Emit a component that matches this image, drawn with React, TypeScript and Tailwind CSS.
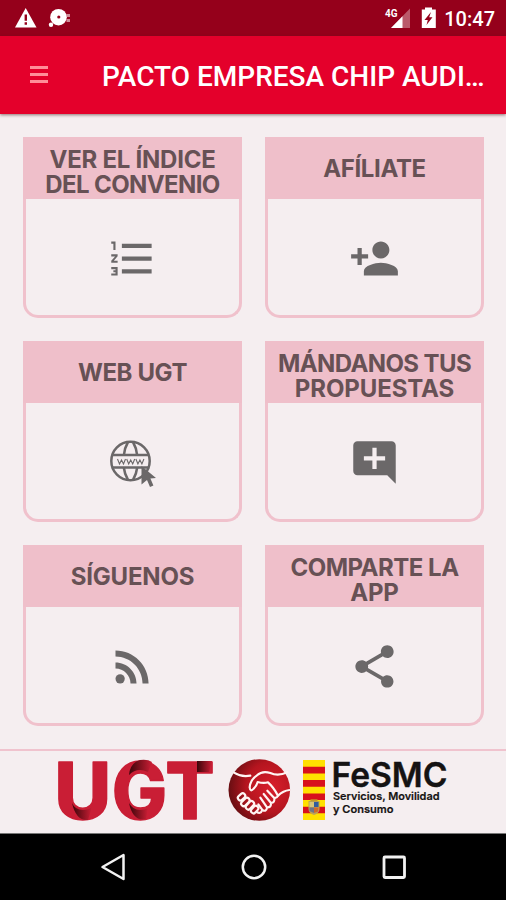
import type { ReactNode } from "react";
import { MdAddComment, MdFormatListNumbered, MdPersonAdd, MdRssFeed, MdShare } from "react-icons/md";

type CardProps = {
  lines: { text: string; spacing: string }[]
  children: ReactNode
}

function StatusBar() {
  return (
    <div className="h-9 bg-[#95001b] flex items-center justify-between pl-[14px] pr-[11px]">
      <svg width="58" height="36" viewBox="14 0 58 36" fill="#fff">
        <path d="M25.700 8 36.500 27.500H15Z" />
        <path d="M24.600 14.500h2.400v6.200h-2.400zM24.600 22.300h2.400v2.500h-2.400z" fill="#95001b" />
        <circle cx="58.500" cy="17.200" r="8.300" />
        <circle cx="51" cy="24.700" r="2.200" />
        <circle cx="58.800" cy="17" r="1.600" fill="#95001b" />
        <path d="M66.500 14h3.500v3h-3.500zM66.500 19h3.500v3h-3.500z" opacity=".55" />
      </svg>
      <div className="flex items-center">
        <svg width="56" height="36" viewBox="384 0 56 36" fill="#fff">
          <path d="M410 8.500V28H391Z" opacity=".35" />
          <path d="M402.500 16.200V28H391Z" />
          <text x="385" y="17" fontSize="11.500" fontWeight="700" fontFamily="Roboto, sans-serif" textLength="12.500" lengthAdjust="spacingAndGlyphs">4G</text>
          <path d="M425 7.500h7v2h3.800V28H421.800V9.500H425z" />
          <path d="m431 12-6.500 8h3.300l-1.300 5 6-7.800h-3.300z" fill="#95001b" />
        </svg>
        <span className="w-[55px] text-right font-[Roboto,sans-serif] font-medium text-[20px] leading-9 text-white pt-[2px]">10:47</span>
      </div>
    </div>
  )
}

function Card({ lines, children }: CardProps) {
  return (
    <div className="h-[181px] rounded-b-[15px] border-[3px] border-t-0 border-[#f0c1cc] flex flex-col">
      <div className={"h-[62px] -mx-[3px] bg-[#efbfca] flex flex-col items-center justify-center text-[24px] leading-[25px] font-bold font-[Inter,sans-serif] text-[#675155]" + (lines.length > 1 ? " pt-[7px]" : "")}>
        {lines.map(line => (
          <div key={line.text} className={"whitespace-nowrap " + line.spacing}>{line.text}</div>
        ))}
      </div>
      <div className="flex-1 flex items-center justify-center pt-[3px] text-[#6b6869]">
        {children}
      </div>
    </div>
  )
}

function GlobeIcon() {
  return (
    <svg width="51" height="51" viewBox="0 0 51 51" fill="none" stroke="currentColor" strokeWidth="2.500">
      <circle cx="23.500" cy="24" r="19.200" />
      <path d="M4.800 18h37.400M4.800 30.500h37.400" />
      <path d="M21 5q-3.500 6-4.200 13.500M26 5q3.500 6 4.200 13.500M16.800 30.500Q17.500 37 21 43M30.200 30.500Q29.500 37 26 43" />
      <path d="m10.500 22 2 5 2-4 2 4 2-5M19.700 22l2 5 2-4 2 4 2-5M28.900 22l2 5 2-4 2 4 2-5" strokeWidth="1.100" />
      <path d="M34.500 29 49 41l-5.600.6 3 7-3.400 1.400-3-7-5.500 4.500Z" fill="currentColor" stroke="none" />
    </svg>
  )
}

function Flag() {
  return (
    <g>
      <path d="M303 760h22v60h-22z" fill="#ffe000" />
      <path d="M303 766.700h22v6.700h-22zM303 780h22v6.700h-22zM303 793.400h22v6.600h-22zM303 806.700h22v6.600h-22z" fill="#d8101c" />
      <path d="M308.500 801h11v8q0 4-5.500 6-5.500-2-5.500-6z" fill="#b9a35b" />
      <path d="M309.500 802h4.500v5h-4.500z" fill="#d8c67a" />
      <path d="M314 802h4.500v5H314z" fill="#315d9e" />
      <path d="M309.500 807.500h4.500v5.500l-4.500-2z" fill="#6e7488" />
      <path d="M314 807.500h4.500l-.5 4-4 1.500z" fill="#d06a2a" />
      <path d="M310.500 799.300h7v2h-7z" fill="#c49a2a" />
    </g>
  )
}

function Logo() {
  return (
    <svg width="506" height="82" viewBox="0 751 506 82" className="block overflow-visible">
      <defs>
        <linearGradient id="foldLeft" x1="0" x2="1">
          <stop offset="0" stopColor="#3b0509" />
          <stop offset="1" stopColor="#c91e35" />
        </linearGradient>
        <radialGradient id="ball" cx=".7" cy=".45" r=".75">
          <stop offset="0" stopColor="#d81f2c" />
          <stop offset=".55" stopColor="#b5151f" />
          <stop offset="1" stopColor="#5b0d10" />
        </radialGradient>
      </defs>

      <g fill="#c91e35" stroke="#c91e35" strokeWidth="1.500" strokeLinejoin="round" fontFamily="Inter, sans-serif" fontWeight="800" fontSize="79">
        <text x="54.500" y="819" textLength="56.500" lengthAdjust="spacingAndGlyphs">U</text>
        <text x="112" y="819" textLength="55" lengthAdjust="spacingAndGlyphs">G</text>
        <text x="165.500" y="819" textLength="49" lengthAdjust="spacingAndGlyphs">T</text>
      </g>
      <path d="M72 803q3 7 11 7 6 0 9-3l-4 13q-12 1-16-17z" fill="url(#foldLeft)" />
      <path d="M129 775q1-12 11-15 8-1 12 2l-4 10q-11-5-19 3z" fill="url(#foldLeft)" />
      <path d="M129 803q4 7 11 7 5 0 8-2l-2 11q-13 3-17-16z" fill="url(#foldLeft)" />
      <path d="M197 761h15l-3 11h-12z" fill="url(#foldLeft)" />

      <circle cx="259.300" cy="790" r="30.800" fill="url(#ball)" />
      <g transform="translate(215 745) scale(.3333)" fill="none" stroke="#fff5f3" strokeWidth="6.500" strokeLinecap="round" strokeLinejoin="round">
        <path d="M57 83q22 14 49 9M217 82q-28 13-51 2-24-8-40 7-20 13-22 36 2 16 12 4 9-8 12-20 18 5 31 1 17 15 30 40 16-15 34-17" />
        <path d="M189 152q-4 9-12 6l-20-21M178 159q2 14-10 15l-22-27M168 176q0 12-12 11l-20-29M156 188q-2 14-14 7l-12-17M141 196q-4 12-16 5" />
        <rect x="68" y="148" width="24" height="15" rx="7" transform="rotate(-42 80 156)" />
        <rect x="76" y="163" width="29" height="15" rx="7" transform="rotate(-45 91 170)" />
        <rect x="90" y="174" width="29" height="15" rx="7" transform="rotate(-48 104 181)" />
        <rect x="106" y="186" width="25" height="15" rx="7" transform="rotate(-48 119 193)" />
      </g>

      <Flag />

      <g fill="#151313" stroke="#151313" fontFamily="Inter, sans-serif">
        <text x="331.500" y="786.500" fontSize="34.500" fontWeight="600" strokeWidth=".4" textLength="116" lengthAdjust="spacingAndGlyphs">FeSMC</text>
        <text x="333" y="800" fontSize="10.800" fontWeight="600" strokeWidth=".2" textLength="106.500" lengthAdjust="spacingAndGlyphs">Servicios, Movilidad</text>
        <text x="333" y="813" fontSize="10.800" fontWeight="600" strokeWidth=".2" textLength="60.500" lengthAdjust="spacingAndGlyphs">y Consumo</text>
      </g>
    </svg>
  )
}

function NavBar() {
  return (
    <div className="h-[67px] bg-black border-t border-[#777] flex items-center justify-between pl-[99px] pr-[98px]">
      <svg width="28" height="28" viewBox="0 0 28 28" fill="none" stroke="#f2f2f2" strokeWidth="2.500" strokeLinejoin="round">
        <path d="M24.500 2v24L3.500 14z" />
      </svg>
      <svg width="28" height="28" viewBox="0 0 28 28" fill="none" stroke="#f2f2f2" strokeWidth="2.500">
        <circle cx="14" cy="14" r="11.200" />
      </svg>
      <svg width="28" height="28" viewBox="0 0 28 28" fill="none" stroke="#f2f2f2" strokeWidth="2.800">
        <rect x="4" y="4" width="20.500" height="20.500" rx="1" />
      </svg>
    </div>
  )
}

function App() {
  return (
    <div className="w-[506px] h-[900px] overflow-hidden bg-[#f5eef0] flex flex-col">
      <StatusBar />
      <header className="h-[78px] bg-[#e4002b] flex items-center pl-[30px] pr-5 shadow-[0_1px_3px_rgba(70,30,30,0.6)]">
        <div className="w-[18px] flex flex-col gap-[4px] -mt-[2px]">
          <div className="h-[3px] bg-[#ff8d98]" />
          <div className="h-[3px] bg-[#ff8d98]" />
          <div className="h-[3px] bg-[#ff8d98]" />
        </div>
        <h1 className="ml-[54px] pt-[3px] whitespace-nowrap font-[Roboto,sans-serif] font-medium text-[28px] text-white">PACTO EMPRESA CHIP AUDI…</h1>
      </header>

      <main className="flex-1 grid grid-cols-2 content-start gap-[23px] pt-[23px] pl-[23px] pr-[22px]">
        <Card lines={[{ text: "VER EL ÍNDICE", spacing: "tracking-[-0.25px]" }, { text: "DEL CONVENIO", spacing: "tracking-[-0.6px]" }]}>
          <MdFormatListNumbered size={51} />
        </Card>
        <Card lines={[{ text: "AFÍLIATE", spacing: "tracking-[-0.35px]" }]}>
          <MdPersonAdd size={51} />
        </Card>
        <Card lines={[{ text: "WEB UGT", spacing: "tracking-[-0.4px]" }]}>
          <GlobeIcon />
        </Card>
        <Card lines={[{ text: "MÁNDANOS TUS", spacing: "tracking-[-0.6px]" }, { text: "PROPUESTAS", spacing: "tracking-[-0.1px]" }]}>
          <MdAddComment size={51} />
        </Card>
        <Card lines={[{ text: "SÍGUENOS", spacing: "tracking-[-0.2px]" }]}>
          <MdRssFeed size={51} />
        </Card>
        <Card lines={[{ text: "COMPARTE LA", spacing: "tracking-[-0.5px]" }, { text: "APP", spacing: "tracking-[-0.2px]" }]}>
          <MdShare size={51} />
        </Card>
      </main>

      <footer className="border-t-2 border-[#f0c3ce]">
        <Logo />
      </footer>
      <NavBar />
    </div>
  )
}

export default App
